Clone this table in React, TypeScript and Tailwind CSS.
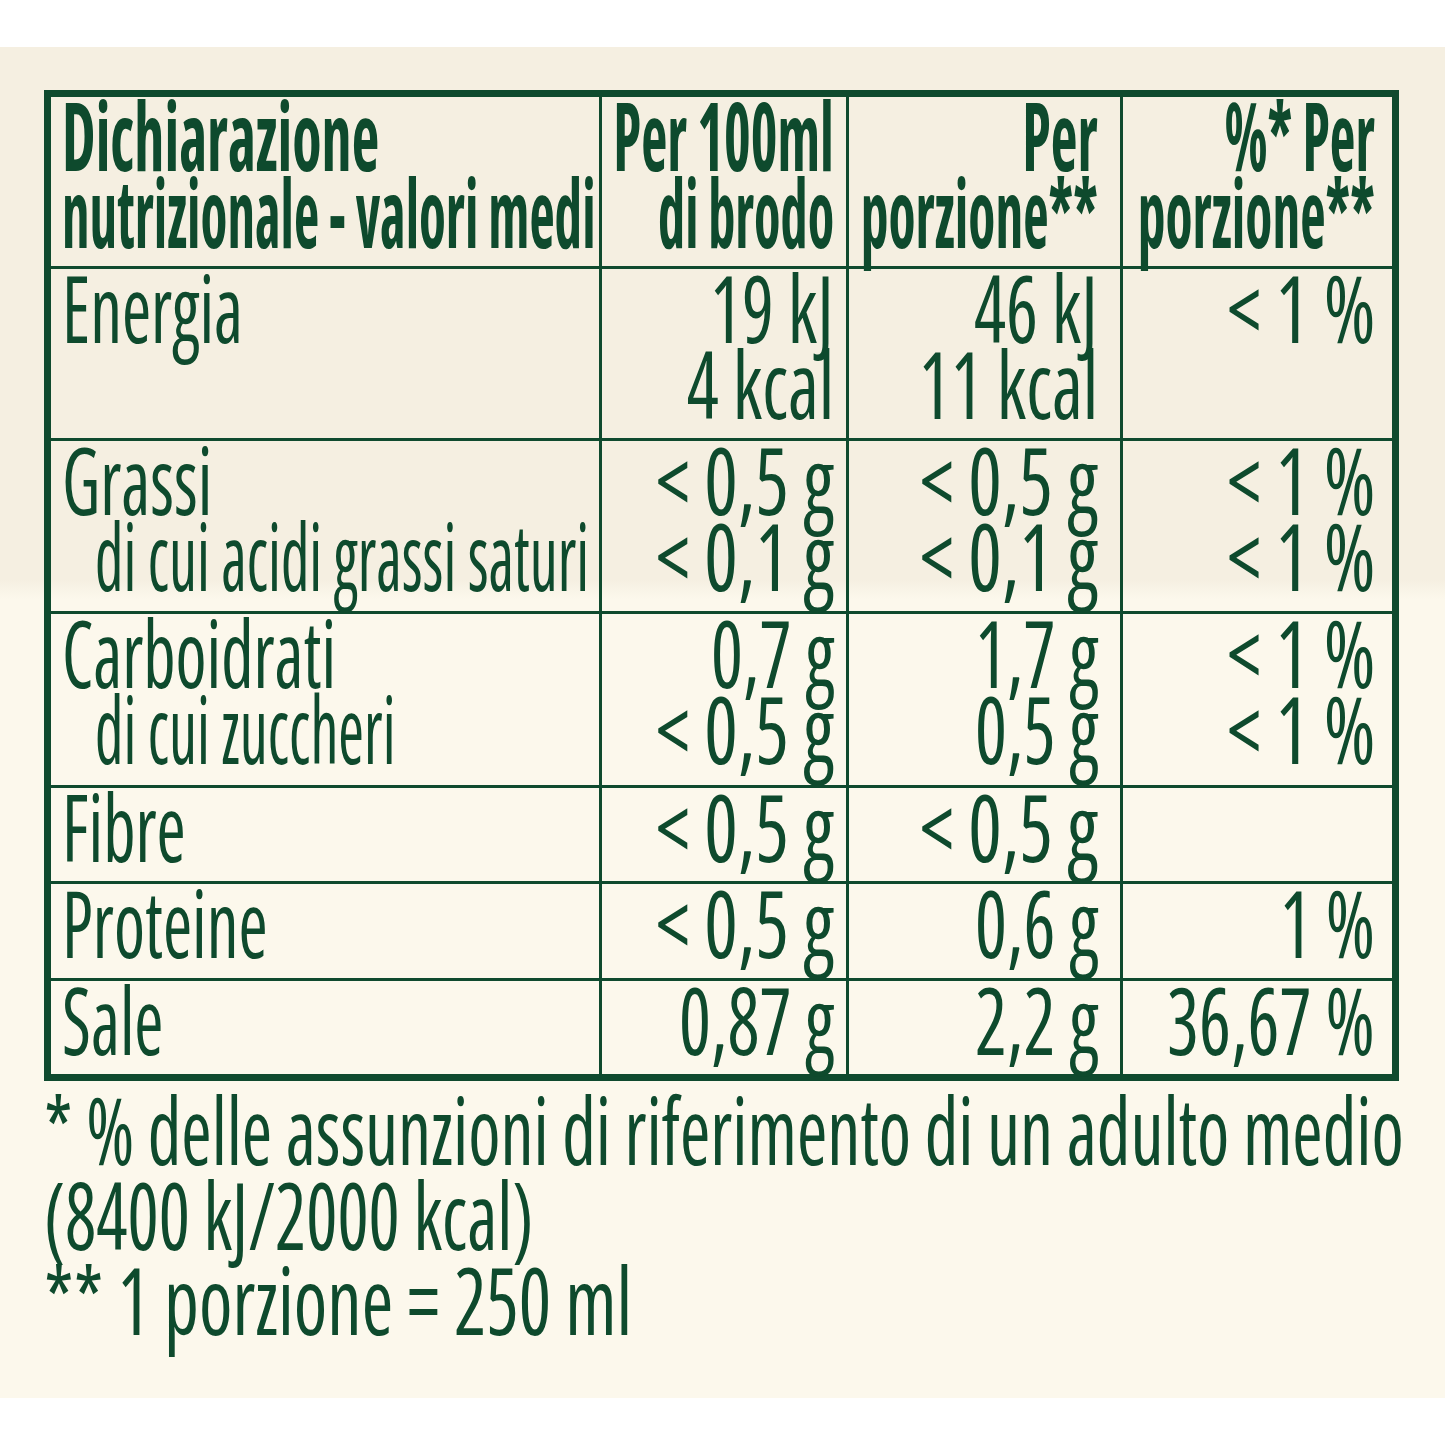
import React from 'react';

type Row = {
  label: string;
  sub?: string;
  a: string[];
  b: string[];
  c: string[];
  h: string;
};

const rows: Row[] = [
  { label: 'Energia', a: ['19 kJ', '4 kcal'], b: ['46 kJ', '11 kcal'], c: ['< 1 %'], h: 'h-[172px]' },
  {
    label: 'Grassi',
    sub: 'di cui acidi grassi saturi',
    a: ['< 0,5 g', '< 0,1 g'],
    b: ['< 0,5 g', '< 0,1 g'],
    c: ['< 1 %', '< 1 %'],
    h: 'h-[173px]',
  },
  {
    label: 'Carboidrati',
    sub: 'di cui zuccheri',
    a: ['0,7 g', '< 0,5 g'],
    b: ['1,7 g', '0,5 g'],
    c: ['< 1 %', '< 1 %'],
    h: 'h-[174px]',
  },
  { label: 'Fibre', a: ['< 0,5 g'], b: ['< 0,5 g'], c: [], h: 'h-[96px]' },
  { label: 'Proteine', a: ['< 0,5 g'], b: ['0,6 g'], c: ['1 %'], h: 'h-[97px]' },
  { label: 'Sale', a: ['0,87 g'], b: ['2,2 g'], c: ['36,67 %'], h: 'h-[96px]' },
];

// the label typeface is a narrow one, so each line gets squeezed horizontally
const Txt: React.FC<{ children: React.ReactNode; right?: boolean; s: string }> = ({ children, right, s }) => (
  <span className={`inline-block whitespace-nowrap ${s} ${right ? 'origin-right' : 'origin-left'}`}>{children}</span>
);

const LABEL = 'scale-x-[0.75]';
const SUB = 'scale-x-[0.66]';

// "<" values sit wider in the print
const valScale = (v: string) => (v.startsWith('<') ? 'scale-x-[0.84]' : 'scale-x-[0.8]');

const col1 = 'w-[548px] shrink-0 min-w-0 pl-[11px] flex flex-col items-start';
const col2 = 'w-[247px] shrink-0 min-w-0 border-l-[3px] border-[#0f4a2e] pr-[12px] flex flex-col items-end';
const col3 = 'w-[274px] shrink-0 min-w-0 border-l-[3px] border-[#0f4a2e] pr-[22px] flex flex-col items-end';
const col4 = 'w-[272px] shrink-0 min-w-0 border-l-[3px] border-[#0f4a2e] pr-[17px] flex flex-col items-end';

const Values: React.FC<{ list: string[] }> = ({ list }) => (
  <>
    {list.map((v, i) => (
      <Txt key={i} s={valScale(v)} right>
        {v}
      </Txt>
    ))}
  </>
);

export default function App() {
  return (
    <div className="min-h-[1445px] bg-white pt-[47px] text-[#0e4a2d] font-['Open_Sans',sans-serif] [font-stretch:75%]">
      <div className="h-[1351px] pt-[43px] bg-[linear-gradient(to_bottom,#f5efe1_0px,#f5efe1_532px,#fcf8ec_552px,#fcf8ec_100%)]">
        <div className="ml-[44px] w-[1355px] border-[7px] border-[#0f4a2e] text-[94px] leading-[76px]">
          <div className="flex h-[169px] font-bold leading-[77px]">
            <div className={col1}>
              <Txt s="scale-x-[0.64]">Dichiarazione</Txt>
              <Txt s="scale-x-[0.586]">nutrizionale - valori medi</Txt>
            </div>
            <div className={col2}>
              <Txt s="scale-x-[0.606]" right>
                Per 100ml
              </Txt>
              <Txt s="scale-x-[0.577]" right>
                di brodo
              </Txt>
            </div>
            <div className={col3}>
              <Txt s="scale-x-[0.62]" right>
                Per
              </Txt>
              <Txt s="scale-x-[0.59]" right>
                porzione**
              </Txt>
            </div>
            <div className={col4}>
              <Txt s="scale-x-[0.595]" right>
                %* Per
              </Txt>
              <Txt s="scale-x-[0.59]" right>
                porzione**
              </Txt>
            </div>
          </div>

          {rows.map((r) => (
            <div key={r.label} className={`flex border-t-[3px] border-[#0f4a2e] ${r.h}`}>
              <div className={col1}>
                <Txt s={LABEL}>{r.label}</Txt>
                {r.sub && (
                  <div className="pl-[33px]">
                    <Txt s={SUB}>{r.sub}</Txt>
                  </div>
                )}
              </div>
              <div className={col2}>
                <Values list={r.a} />
              </div>
              <div className={col3}>
                <Values list={r.b} />
              </div>
              <div className={col4}>
                <Values list={r.c} />
              </div>
            </div>
          ))}
        </div>

        <div className="ml-[44px] mt-[6px] flex flex-col items-start text-[94px] leading-[85px]">
          <Txt s="scale-x-[0.78]">* % delle assunzioni di riferimento di un adulto medio</Txt>
          <Txt s="scale-x-[0.78]">(8400 kJ/2000 kcal)</Txt>
          <Txt s="scale-x-[0.81]">** 1 porzione = 250 ml</Txt>
        </div>
      </div>
    </div>
  );
}
